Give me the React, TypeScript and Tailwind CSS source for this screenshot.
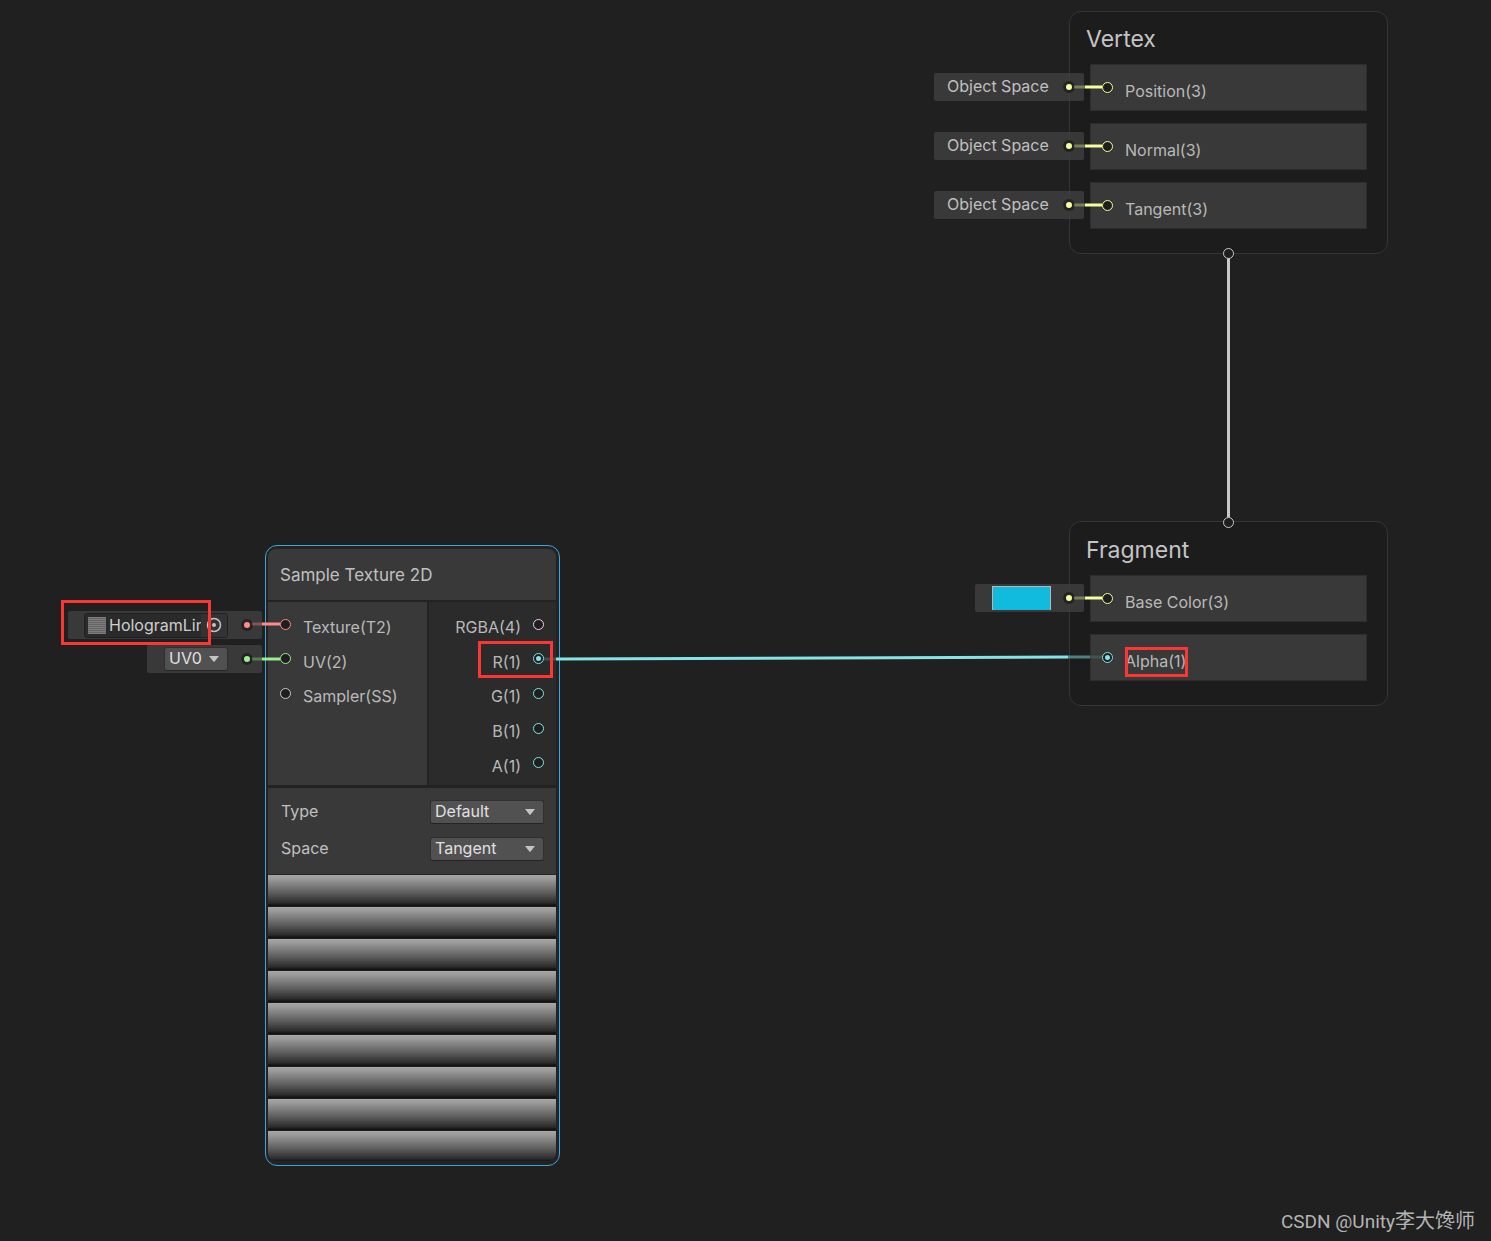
import React from "react";

type Tone = "vector" | "texture" | "uv" | "plain" | "rgba" | "scalar";

const ringTone: Record<Tone, string> = {
  vector: "border-[#f6ff9a]",
  texture: "border-[#ff8b8b]",
  uv: "border-[#9aef92]",
  plain: "border-[#c8c8c8]",
  rgba: "border-[#fbcbf4]",
  scalar: "border-[#84e4e7]",
};

const dotTone: Record<Tone, string> = {
  vector: "bg-[#f6ff9a]",
  texture: "bg-[#ff8b8b]",
  uv: "bg-[#9aef92]",
  plain: "bg-[#c8c8c8]",
  rgba: "bg-[#fbcbf4]",
  scalar: "bg-[#84e4e7]",
};

function Port({ tone, connected = false }: { tone: Tone; connected?: boolean }) {
  return (
    <span className={`grid size-[11px] shrink-0 place-items-center rounded-full border bg-[#1e1e1e] ${ringTone[tone]}`}>
      {connected && <span className={`size-[5px] rounded-full ${dotTone[tone]}`} />}
    </span>
  );
}

function PillDot({ tone }: { tone: Tone }) {
  return (
    <span className="grid size-3 shrink-0 place-items-center rounded-full bg-[#232323]">
      <span className={`size-1.5 rounded-full ${dotTone[tone]}`} />
    </span>
  );
}

function Pill({ tone, className = "", children }: { tone: Tone; className?: string; children: React.ReactNode }) {
  return (
    <div className={`flex h-7 items-center justify-between rounded-xs bg-[#424242]/75 pr-[9px] ${className}`}>
      {children}
      <PillDot tone={tone} />
    </div>
  );
}

function Caret() {
  return (
    <svg viewBox="0 0 10 6" className="pointer-events-none absolute right-[9px] h-1.5 w-2.5" aria-hidden="true">
      <path d="M0 0H10L5.6 5.4Q5 6 4.4 5.4Z" fill="#c4c4c4" />
    </svg>
  );
}

function Dropdown({ id, label, options, className }: { id: string; label?: string; options: string[]; className: string }) {
  return (
    <span className={`relative flex items-center ${className}`}>
      <select
        id={id}
        aria-label={label}
        className="h-6 w-full appearance-none rounded-[3px] border border-[#303030] border-b-[#242424] bg-[#515151] pr-5 pb-0.5 pl-1 text-base leading-5 text-[#e0e0e0]"
      >
        {options.map((option) => (
          <option key={option}>{option}</option>
        ))}
      </select>
      <Caret />
    </span>
  );
}

function ContextBlock({ title, slots, className }: { title: string; slots: { name: string; tone: Tone; connected?: boolean }[]; className: string }) {
  return (
    <section className={`absolute w-[319px] rounded-xl border border-[#353535] bg-[#1c1c1c] px-5 pb-6 ${className}`}>
      <h2 className="-ml-1 flex h-[52px] items-center pt-0.5 text-[23px] text-[#c4c4c4]">{title}</h2>
      <ul className="flex flex-col gap-3">
        {slots.map((slot) => (
          <li key={slot.name} className="flex h-[47px] items-center gap-3 border border-[#2d2d2d] bg-[#393939] pl-[11px]">
            <Port tone={slot.tone} connected={slot.connected} />
            <span className="pt-1.5 text-base leading-5 text-[#b9b9b9]">{slot.name}</span>
          </li>
        ))}
      </ul>
    </section>
  );
}

const inputs: { name: string; tone: Tone }[] = [
  { name: "Texture(T2)", tone: "texture" },
  { name: "UV(2)", tone: "uv" },
  { name: "Sampler(SS)", tone: "plain" },
];

const outputs: { name: string; tone: Tone; connected?: boolean }[] = [
  { name: "RGBA(4)", tone: "rgba" },
  { name: "R(1)", tone: "scalar", connected: true },
  { name: "G(1)", tone: "scalar" },
  { name: "B(1)", tone: "scalar" },
  { name: "A(1)", tone: "scalar" },
];

function SampleTextureNode() {
  return (
    <section className="absolute top-[545px] left-[265px] w-[295px] rounded-xl border border-[#3fa5dd] bg-[#232323] pt-[3px] pr-[3px] pb-1 pl-0.5">
      <div className="overflow-hidden rounded-lg">
        <h2 className="flex h-[51px] items-center bg-[#393939] pt-0.5 pl-3 text-[17px] text-[#c0c0c0]">Sample Texture 2D</h2>
        <div className="mt-0.5 flex h-[183px] gap-0.5">
          <ul className="grid flex-1 grid-rows-5 bg-[#393939] py-[5px] pl-3">
            {inputs.map((port) => (
              <li key={port.name} className="flex items-center gap-3">
                <Port tone={port.tone} />
                <span className="pt-1.5 text-base leading-5 text-[#b9b9b9]">{port.name}</span>
              </li>
            ))}
          </ul>
          <ul className="grid w-[127px] grid-rows-5 bg-[#2b2b2b] py-[5px] pr-3">
            {outputs.map((port) => (
              <li key={port.name} className="flex items-center justify-end gap-3">
                <span className="pt-1.5 text-base leading-5 text-[#b9b9b9]">{port.name}</span>
                <Port tone={port.tone} connected={port.connected} />
              </li>
            ))}
          </ul>
        </div>
        <div className="mt-[3px] flex h-[86px] flex-col justify-center gap-[13px] bg-[#393939] pr-3 pb-px pl-[13px]">
          <div className="flex items-center justify-between">
            <label htmlFor="type" className="pb-0.5 text-base leading-5 text-[#c0c0c0]">Type</label>
            <Dropdown id="type" options={["Default", "Normal"]} className="w-[114px]" />
          </div>
          <div className="flex items-center justify-between">
            <label htmlFor="space" className="pb-0.5 text-base leading-5 text-[#c0c0c0]">Space</label>
            <Dropdown id="space" options={["Tangent", "Object"]} className="w-[114px]" />
          </div>
        </div>
        <div
          role="img"
          aria-label="Texture preview"
          className="mt-px h-[286px] bg-[repeating-linear-gradient(to_bottom,#a6a6a6_0px,#9a9a9a_4px,#5c5c5c_18px,#2a2a2a_28px,#0c0c0c_31px,#303030_32px)]"
        />
      </div>
    </section>
  );
}

function Wires() {
  return (
    <svg className="pointer-events-none absolute top-0 left-0 h-[1241px] w-[1491px]" fill="none" aria-hidden="true">
      <g strokeWidth="3">
        <g stroke="#f6ff9a">
          {[87, 146, 205, 598].map((y) => (
            <React.Fragment key={y}>
              <path d={`M1074 ${y}H1085`} strokeOpacity="0.35" />
              <path d={`M1085 ${y}H1102`} />
            </React.Fragment>
          ))}
        </g>
        <path d="M252 624H262" stroke="#ff8b8b" strokeOpacity="0.35" />
        <path d="M262 624H280" stroke="#ff8b8b" />
        <path d="M252 659H262" stroke="#9aef92" strokeOpacity="0.35" />
        <path d="M262 659H280" stroke="#9aef92" />
        <path d="M544 659H556" stroke="#84e4e7" strokeOpacity="0.2" />
        <path d="M556 659L1068 657" stroke="#84e4e7" />
        <path d="M1068 657H1090" stroke="#84e4e7" strokeOpacity="0.5" />
        <path d="M1090 657H1102" stroke="#84e4e7" strokeOpacity="0.15" />
        <path d="M1228.500 258V517" stroke="#c8c8c8" />
      </g>
      <g stroke="#c8c8c8" fill="#1e1e1e">
        <circle cx="1228.500" cy="253.500" r="5" />
        <circle cx="1228.500" cy="522.500" r="5" />
      </g>
    </svg>
  );
}

export default function App() {
  return (
    <main className="relative min-h-screen w-full overflow-hidden bg-[#202020] font-['Inter','Noto_Sans_CJK_SC',sans-serif]">
      <ContextBlock
        title="Vertex"
        className="top-[11px] left-[1069px]"
        slots={[
          { name: "Position(3)", tone: "vector" },
          { name: "Normal(3)", tone: "vector" },
          { name: "Tangent(3)", tone: "vector" },
        ]}
      />
      <ContextBlock
        title="Fragment"
        className="top-[521px] left-[1069px] pt-px"
        slots={[
          { name: "Base Color(3)", tone: "vector" },
          { name: "Alpha(1)", tone: "scalar", connected: true },
        ]}
      />
      <SampleTextureNode />

      <div className="absolute top-[73px] left-[934px] flex w-[150px] flex-col gap-[31px]">
        {["Position", "Normal", "Tangent"].map((slot) => (
          <Pill key={slot} tone="vector" className="pl-[13px]">
            <span className="pb-0.5 text-base leading-5 text-[#c0c0c0]">Object Space</span>
          </Pill>
        ))}
      </div>
      <div className="absolute top-[584px] left-[975px] w-[109px]">
        <Pill tone="vector" className="pl-[17px]">
          <input
            type="color"
            aria-label="Base Color"
            defaultValue="#11bbdd"
            className="h-6 w-[59px] appearance-none border border-b-0 border-[#b8b8b8] bg-[#11bbdd] p-0 [&::-webkit-color-swatch]:border-0 [&::-webkit-color-swatch-wrapper]:p-0"
          />
        </Pill>
      </div>
      <div className="absolute top-[611px] left-[68px] flex w-[194px] flex-col items-end gap-[6px]">
        <Pill tone="texture" className="w-full pl-4">
          <button
            type="button"
            className="flex h-[25px] w-36 items-center rounded-[3px] border border-[#202020] bg-[#2a2a2a] pl-[3px] text-base leading-5 text-[#cfcfcf]"
          >
            <span className="mr-[3px] h-[17px] w-[18px] shrink-0 bg-[repeating-linear-gradient(to_bottom,#7c7c7c_0px,#7c7c7c_1px,#666666_1px,#666666_2px)]" />
            <span className="w-[92px] overflow-hidden text-left whitespace-nowrap">HologramLine</span>
            <span className="grid h-full flex-1 place-items-center bg-[#333333]">
              <svg viewBox="0 0 16 16" className="size-4" fill="none" aria-hidden="true">
                <circle cx="8" cy="8" r="6.500" stroke="#c4c4c4" strokeWidth="1.500" />
                <circle cx="8" cy="8" r="2" fill="#c4c4c4" />
              </svg>
            </span>
          </button>
        </Pill>
        <Pill tone="uv" className="w-[115px] pl-[17px]">
          <Dropdown id="uv" label="UV channel" options={["UV0", "UV1", "UV2", "UV3"]} className="w-16" />
        </Pill>
      </div>

      <Wires />

      <div className="pointer-events-none absolute top-[600px] left-[61px] h-[45px] w-[150px] border-3 border-[#fb3634]" />
      <div className="pointer-events-none absolute top-[641px] left-[478px] h-[37px] w-[75px] border-3 border-[#fb3634]" />
      <div className="pointer-events-none absolute top-[647px] left-[1125px] h-[30px] w-[63px] border-3 border-[#fb3634]" />

      <p className="absolute right-4 bottom-[5px] font-['Roboto','Noto_Sans_CJK_SC',sans-serif] text-xl leading-7 text-[#b4b4b4]">
        <span className="text-[19px]">CSDN @Unity</span>李大馋师
      </p>
    </main>
  );
}
